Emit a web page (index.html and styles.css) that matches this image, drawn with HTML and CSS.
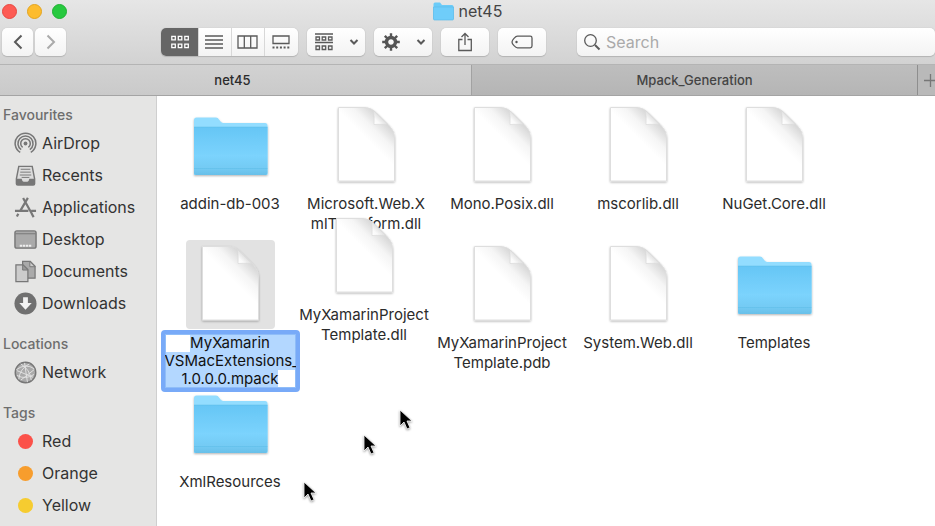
FILE: index.html
```
<!DOCTYPE html>
<html lang="en">
<head>
<meta charset="utf-8">
<title>net45</title>
<link rel="stylesheet" href="styles.css">
</head>
<body>
<svg class="defs" aria-hidden="true">
  <defs>
    <linearGradient id="folder-front" x1="0" y1="0" x2="0" y2="1">
      <stop offset="0" stop-color="#66c6f5"/><stop offset=".6" stop-color="#7bd3fd"/><stop offset=".84" stop-color="#74cbf4"/><stop offset="1" stop-color="#69c0e9"/>
    </linearGradient>
    <linearGradient id="fold" gradientUnits="userSpaceOnUse" x1="52" y1="24" x2="59" y2="17">
      <stop offset="0" stop-color="#fff"/><stop offset=".5" stop-color="#fafafa"/><stop offset="1" stop-color="#e2e2e2"/>
    </linearGradient>
    <linearGradient id="fold-shade" gradientUnits="userSpaceOnUse" x1="42" y1="35" x2="61" y2="16">
      <stop offset="0" stop-color="#fff"/><stop offset=".45" stop-color="#f5f5f5"/><stop offset="1" stop-color="#d2d2d2"/>
    </linearGradient>
    <filter id="drop" x="-10%" y="-10%" width="120%" height="120%"><feDropShadow dx="0" dy="1" stdDeviation="1" flood-opacity=".3"/></filter>
    <symbol id="folder" viewBox="0 0 89 89">
      <g filter="url(#drop)">
        <path d="M8 74V19q0-2.500 2.500-2.500H30q2 0 3 2l2 2.500q1 1 3 1h41q2.500 0 2.500 2.500V74z" fill="#93ddff"/>
        <path d="M8 26h73.500v46q0 2-2 2H10q-2 0-2-2z" fill="url(#folder-front)"/>
      </g>
      <path d="M8 26h73.500M8 67.500h73.500" stroke="#55b8e4" stroke-opacity=".4" fill="none"/>
    </symbol>
    <symbol id="doc" viewBox="0 0 89 89">
      <path d="M16.500 6.500H43q6 0 11 5L67.500 25q5 5 5 12v43h-56z" fill="url(#fold-shade)" stroke="#dedede" filter="url(#drop)"/>
      <path d="M51.500 9.500L66 23.500q-3-.5-14 0 .5-8-.5-14z" fill="url(#fold)" stroke="#dadada" stroke-width=".7"/>
    </symbol>
    <symbol id="pointer" viewBox="0 0 14 22">
      <path d="M1 1v16l4-4 3 7 3-1.300-3-6.700h5z" fill="#000" stroke="#fff" stroke-width=".8"/>
    </symbol>
  </defs>
</svg>

<div class="window">
  <header class="titlebar">
    <div class="title-row">
      <div class="lights">
        <button class="light close" aria-label="Close"></button>
        <button class="light minimise" aria-label="Minimise"></button>
        <button class="light zoom" aria-label="Zoom"></button>
      </div>
      <h1 class="title">
        <svg width="21" height="19" viewBox="0 0 21 19"><path d="M.5 17V2q0-1.500 1.500-1.500h5L9 3h10q1.500 0 1.500 1.500V17z" fill="#6bcbf8"/><path d="M.5 5h20v12q0 1-1 1h-18q-1 0-1-1z" fill="#6fcdfa" stroke="#5bbce9" stroke-width=".7"/></svg>
        net45
      </h1>
    </div>
    <div class="toolbar">
      <div class="nav">
        <button class="btn nav-btn" aria-label="Back"><svg width="12" height="16" viewBox="0 0 12 16"><path d="M9.500 1.500L3 8l6.500 6.500" class="line heavy"/></svg></button>
        <button class="btn nav-btn dim" aria-label="Forward"><svg width="12" height="16" viewBox="0 0 12 16"><path d="M2.500 1.500L9 8l-6.500 6.500" class="line heavy"/></svg></button>
      </div>
      <div class="segments">
        <button class="seg on" aria-label="Icons"><svg width="20" height="14" viewBox="0 0 20 14"><path d="M1.800 1.300h3.500v3.500H1.800zM8.300 1.300h3.500v3.500H8.300zM14.800 1.300h3.500v3.500h-3.500zM1.800 9.200h3.500v3.500H1.800zM8.300 9.200h3.500v3.500H8.300zM14.800 9.200h3.500v3.500h-3.500z" class="line"/></svg></button>
        <button class="seg" aria-label="List"><svg width="20" height="14" viewBox="0 0 20 14"><path d="M1 1h18M1 5h18M1 9h18M1 13h18" class="line"/></svg></button>
        <button class="seg" aria-label="Columns"><svg width="21" height="14" viewBox="0 0 21 14"><path d="M1 1h19v12H1zM7.300 1v12M13.700 1v12" class="line"/></svg></button>
        <button class="seg" aria-label="Gallery"><svg width="20" height="14" viewBox="0 0 20 14"><path d="M2 1h16v7.500H2z" class="line"/><path d="M1.500 12.500h17" class="line heavy" stroke-dasharray="2 1.700"/></svg></button>
      </div>
      <button class="btn drop" aria-label="Group by"><svg width="20" height="18" viewBox="0 0 20 18"><path d="M1 1h18M1 9.500h18" class="line"/><path d="M2 4h3.500v3H2zM8.200 4h3.500v3H8.200zM14.500 4H18v3h-3.500zM2 13h3.500v3.500H2zM8.200 13h3.500v3.500H8.200zM14.500 13H18v3.500h-3.500z" class="line"/></svg><svg width="10" height="8" viewBox="0 0 10 8"><path d="M1.500 2L5 5.500 8.500 2" class="line heavy"/></svg></button>
      <button class="btn drop" aria-label="Action"><svg width="20" height="18" viewBox="-10 -9 20 18"><circle r="4.500" fill="none" stroke="#555" stroke-width="3.400"/><path d="M0-5v-3.800M0 5v3.800M-5 0h-3.800M5 0h3.800M-3.500-3.500l-2.700-2.700M3.500 3.500l2.700 2.700M-3.500 3.500l-2.700 2.700M3.500-3.500l2.700-2.700" stroke="#555" stroke-width="2.400"/></svg><svg width="10" height="8" viewBox="0 0 10 8"><path d="M1.500 2L5 5.500 8.500 2" class="line heavy"/></svg></button>
      <button class="btn single" aria-label="Share"><svg width="16" height="20" viewBox="0 0 16 20"><path d="M5.500 7.500H1.800v11h12.500v-11h-3.800M8 13V1.800M4.500 5L8 1.500 11.500 5" class="line"/></svg></button>
      <button class="btn single" aria-label="Edit tags"><svg width="22" height="14" viewBox="0 0 22 14"><path d="M6.500 1.200h12.700q1.800 0 1.800 1.800v8q0 1.800-1.800 1.800H6.500C4.500 12.800 1 9 1 7s3.500-5.800 5.500-5.800z" class="line"/><circle cx="5.500" cy="7" r="1.200" fill="#555"/></svg></button>
      <label class="search"><svg width="18" height="18" viewBox="0 0 18 18"><circle cx="7.500" cy="7.500" r="5.800" class="line"/><path d="M12 12l4.500 4.500" class="line heavy"/></svg><input type="search" placeholder="Search" aria-label="Search"></label>
    </div>
  </header>

  <nav class="tabs">
    <button class="tab current">net45</button>
    <button class="tab other">Mpack_Generation</button>
    <button class="tab-add" aria-label="New tab"><svg width="13" height="13" viewBox="0 0 13 13"><path d="M6.500 0v13M0 6.500h13" stroke="#777" stroke-width="1.300"/></svg></button>
  </nav>

  <div class="body">
    <aside class="sidebar">
      <h2>Favourites</h2>
      <ul>
        <li><a href="#"><svg viewBox="0 0 24 24"><g class="grey" stroke-width="1.600"><path d="M6.500 21.300a10.800 10.800 0 1 1 11 0"/><path d="M7.500 18.500a7.900 7.900 0 1 1 9 0"/><path d="M9 16a5 5 0 1 1 6 0"/></g><circle cx="12" cy="12" r="2" fill="#777"/></svg>AirDrop</a></li>
        <li><a href="#"><svg viewBox="0 0 24 24"><path d="M5 2.500h14l2.500 13v5q0 1.500-1.500 1.500H4q-1.500 0-1.500-1.500v-5z" fill="#dcdcdc" stroke="#777" stroke-width="1.500"/><path d="M2.500 15.500H8q.5 3 2 3h4q1.500 0 2-3h5.500v5q0 1.500-1.500 1.500H4q-1.500 0-1.500-1.500z" fill="#777"/><path d="M7 5.500h10M6.500 8.500h11M6 11.500h12M8 14h8" class="grey"/></svg>Recents</a></li>
        <li><a href="#"><svg viewBox="0 0 24 24"><path d="M9.500 2l10 18M14.500 2L6.500 15.500M1 15.500h14M18 15.500h5M4.500 18.500L3 21.500M18.500 18.500l2 3.500" class="grey" stroke-width="2.300"/></svg>Applications</a></li>
        <li><a href="#"><svg viewBox="0 0 24 24"><rect x="1" y="3" width="22" height="18" rx="2" fill="#aaa" stroke="#777" stroke-width="1.500"/><path d="M1.500 6h21" stroke="#777"/><path d="M6 18.500h12" stroke="#eee" stroke-width="2.300" stroke-dasharray="2.500 .7"/></svg>Desktop</a></li>
        <li><a href="#"><svg viewBox="0 0 24 24"><path d="M9 1.500h8l5 5V19H9z" fill="#aaa" stroke="#777" stroke-width="1.300"/><path d="M16.500 1.500V7H22z" fill="#ccc" stroke="#777"/><path d="M2 5h7.500l5 5v12.500H2z" fill="#ccc" stroke="#777" stroke-width="1.300"/><path d="M9 5v5.500h5.500z" fill="#999" stroke="#777"/></svg>Documents</a></li>
        <li><a href="#"><svg viewBox="0 0 24 24"><circle cx="12" cy="12" r="11.500" fill="#707070"/><path d="M9.500 5.500h5v6h4L12 18.500l-6.500-7h4z" fill="#f2f2f2"/></svg>Downloads</a></li>
      </ul>
      <h2>Locations</h2>
      <ul>
        <li><a href="#"><svg viewBox="0 0 24 24"><circle cx="12" cy="12" r="10.700" fill="#aaa" stroke="#777" stroke-width="1.500"/><path d="M2.500 9Q12 2 21 8M3 15q9 5 18-1M7 3q10 6 11 17M16 3Q6 8 5 19M3 10l17 7M11 2l3 20M21 9L7 20" fill="none" stroke="#e2e2e2"/></svg>Network</a></li>
      </ul>
      <h2>Tags</h2>
      <ul>
        <li><a href="#"><span class="dot red"></span>Red</a></li>
        <li><a href="#"><span class="dot orange"></span>Orange</a></li>
        <li><a href="#"><span class="dot yellow"></span>Yellow</a></li>
      </ul>
    </aside>

    <main class="files">
      <figure><svg class="thumb"><use href="#folder"/></svg><figcaption>addin-db-003</figcaption></figure>
      <figure><svg class="thumb"><use href="#doc"/></svg><figcaption>Microsoft.Web.X<br>mlTransform.dll</figcaption></figure>
      <figure><svg class="thumb"><use href="#doc"/></svg><figcaption>Mono.Posix.dll</figcaption></figure>
      <figure><svg class="thumb"><use href="#doc"/></svg><figcaption>mscorlib.dll</figcaption></figure>
      <figure><svg class="thumb"><use href="#doc"/></svg><figcaption>NuGet.Core.dll</figcaption></figure>
      <figure><svg class="thumb selected"><use href="#doc"/></svg><textarea class="rename" rows="3" aria-label="File name" spellcheck="false">MyXamarin
VSMacExtensions_
1.0.0.0.mpack</textarea></figure>
      <figure class="moved"><svg class="thumb"><use href="#doc"/></svg><figcaption>MyXamarinProject<br>Template.dll</figcaption></figure>
      <figure><svg class="thumb"><use href="#doc"/></svg><figcaption>MyXamarinProject<br>Template.pdb</figcaption></figure>
      <figure><svg class="thumb"><use href="#doc"/></svg><figcaption>System.Web.dll</figcaption></figure>
      <figure><svg class="thumb"><use href="#folder"/></svg><figcaption>Templates</figcaption></figure>
      <figure><svg class="thumb"><use href="#folder"/></svg><figcaption>XmlResources</figcaption></figure>
      <svg class="pointer first"><use href="#pointer"/></svg>
      <svg class="pointer second"><use href="#pointer"/></svg>
      <svg class="pointer third"><use href="#pointer"/></svg>
    </main>
  </div>
</div>
</body>
</html>
```

FILE: styles.css
```
* { box-sizing: border-box; }
body {
  margin: 0;
  font-family: Inter, "Liberation Sans", sans-serif;
  font-size: 15px;
  color: #2b2b2b;
  overflow: hidden;
}
button, input, textarea { font: inherit; color: inherit; }
button { border: 0; padding: 0; background: none; }
svg { display: block; flex: none; }
.defs { position: absolute; width: 0; height: 0; }
.window { display: flex; flex-direction: column; min-height: 100vh; }

.titlebar {
  background: linear-gradient(#e6e6e6, #d2d2d2);
  border-bottom: 1px solid #b4b4b4;
  padding-bottom: 8px;
}
.title-row { display: grid; grid-template-columns: 1fr auto 1fr; align-items: center; height: 22px; margin-bottom: 6px; padding-left: 2px; }
.lights { display: flex; gap: 10px; }
.light { width: 15px; height: 15px; border-radius: 50%; }
.close { background: #fd5b54; border: 1px solid #e8473f; }
.minimise { background: #fdbc2e; border: 1px solid #e3a41f; }
.zoom { background: #27c93f; border: 1px solid #1db131; }
.title { display: flex; align-items: center; gap: 5px; margin: 0; padding-right: 2px; font-size: 16px; font-weight: 400; color: #444; }

.toolbar { display: flex; align-items: stretch; gap: 9px; height: 28px; padding-left: 2px; }
.nav { display: flex; gap: 2px; margin-right: 86px; }
.btn, .segments, .search {
  background: linear-gradient(#fff, #f3f3f3);
  border-radius: 5px;
  box-shadow: 0 0 1px #aaa, 0 1px 1px #b4b4b4;
}
.btn { display: flex; align-items: center; justify-content: center; }
.nav-btn { width: 31px; }
.line { fill: none; stroke: #5a5a5a; stroke-width: 1.3; }
.heavy { stroke-width: 2; }
.dim .line { stroke: #aaa; }
.segments { display: flex; overflow: hidden; }
.seg { display: flex; align-items: center; justify-content: center; width: 33px; padding-right: 2px; border-left: 1px solid #d8d8d8; }
.seg:last-child { width: 34px; }
.seg.on { width: 37px; padding: 0; background: #666; border: 0; }
.on .line { stroke: #fff; }
.drop { width: 58px; gap: 15px; }
.single { width: 48px; }
.search { display: flex; align-items: center; flex: 1; gap: 5px; margin-left: 22px; padding-left: 6px; min-width: 0; }
.search input { flex: 1; min-width: 0; padding: 0; border: 0; outline: 0; background: none; font-size: 16px; }
.search input::placeholder { color: #aaa; opacity: 1; }

.tabs { display: flex; height: 31px; border-bottom: 1px solid #a4a4a4; font-size: 13px; font-weight: 500; }
.tab { flex: 1 1 0; padding: 0; }
.current { flex-grow: 1.045; padding-right: 6px; background: linear-gradient(#d2d2d2, #cacaca); }
.other { background: linear-gradient(#bebebe, #b5b5b5); border-left: 1px solid #a2a2a2; color: #444; }
.tab-add { width: 18px; padding-left: 6px; overflow: hidden; background: #b9b9b9; border-left: 1px solid #8e8e8e; }

.body { display: flex; flex: 1; }
.sidebar { width: 157px; padding-top: 7px; background: #e5e5e4; border-right: 1px solid #cfcfcf; }
.sidebar h2 { margin: 13px 0 0; padding-left: 3px; font-size: 14px; line-height: 24px; font-weight: 500; color: #6e6e6e; }
.sidebar h2:first-child { margin-top: 0; }
.sidebar ul { margin: 0; padding: 0; list-style: none; }
.sidebar a { display: flex; align-items: center; gap: 5px; height: 32px; padding-left: 14px; font-size: 16px; color: #333; text-decoration: none; }
.sidebar svg { width: 23px; height: 23px; }
.grey { fill: none; stroke: #777; }
.dot { width: 15px; height: 15px; margin: 0 4px; border-radius: 50%; }
.red { background: #fb5149; }
.orange { background: #f79d2d; }
.yellow { background: #f6cc30; }

.files {
  position: relative;
  flex: 1;
  display: grid;
  grid-template-columns: repeat(auto-fill, 136px);
  grid-auto-rows: 139px;
  align-content: start;
  padding: 5px 0 0 5px;
  background: #fff;
}
figure { display: flex; flex-direction: column; align-items: center; margin: 0; }
.thumb { width: 89px; height: 89px; border-radius: 4px; }
.selected { background: #e2e2e2; }
figcaption { margin-top: 4px; line-height: 20px; text-align: center; white-space: nowrap; }
.moved { position: relative; top: -28px; left: -2px; z-index: 1; }
.rename {
  flex: none;
  width: 139px;
  height: 62px;
  margin-top: 1px;
  padding: 0;
  border: 4px solid #78aaf8;
  border-radius: 4px;
  outline: 0;
  resize: none;
  overflow: hidden;
  white-space: pre;
  text-align: center;
  line-height: 18px;
  color: #111;
  background:
    linear-gradient(#fff, #fff) 1px 1px / 24px 17px no-repeat,
    linear-gradient(#fff, #fff) right 1px bottom 1px / 17px 17px no-repeat,
    #b3d7ff;
  box-shadow: inset 0 0 0 1px #8fbdf8;
}
.pointer { position: absolute; width: 14px; height: 22px; filter: drop-shadow(0 1px 1px #0006); }
.first { left: 242px; top: 313px; }
.second { left: 206px; top: 338px; }
.third { left: 146px; top: 385px; }
```
